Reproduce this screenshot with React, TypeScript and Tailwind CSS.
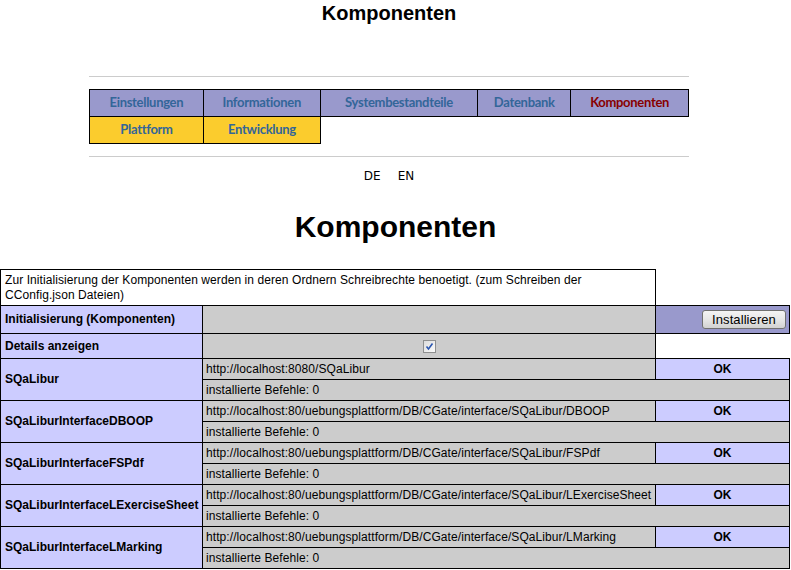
import React from 'react';

interface NavItem {
  label: string;
  width: string;
  active?: boolean;
}

interface Component {
  name: string;
  url: string;
}

const navTop: NavItem[] = [
  { label: 'Einstellungen', width: 'w-[114px]' },
  { label: 'Informationen', width: 'w-[117px]' },
  { label: 'Systembestandteile', width: 'w-[158px]' },
  { label: 'Datenbank', width: 'w-[93px]' },
  { label: 'Komponenten', width: 'w-[118px]', active: true }
];

const navBottom: NavItem[] = [
  { label: 'Plattform', width: 'w-[114px]' },
  { label: 'Entwicklung', width: 'w-[117px]' }
];

const components: Component[] = [
  { name: 'SQaLibur', url: 'http://localhost:8080/SQaLibur' },
  { name: 'SQaLiburInterfaceDBOOP', url: 'http://localhost:80/uebungsplattform/DB/CGate/interface/SQaLibur/DBOOP' },
  { name: 'SQaLiburInterfaceFSPdf', url: 'http://localhost:80/uebungsplattform/DB/CGate/interface/SQaLibur/FSPdf' },
  { name: 'SQaLiburInterfaceLExerciseSheet', url: 'http://localhost:80/uebungsplattform/DB/CGate/interface/SQaLibur/LExerciseSheet' },
  { name: 'SQaLiburInterfaceLMarking', url: 'http://localhost:80/uebungsplattform/DB/CGate/interface/SQaLibur/LMarking' }
];

const navFont = "font-['Lato','Open_Sans',sans-serif]";

function NavCell({ item, yellow }: { item: NavItem; yellow?: boolean }) {
  return (
    <div
      className={`${item.width} flex items-center justify-center border-r border-b border-black text-[13px] font-bold tracking-[-0.3px] ${
        yellow ? 'bg-[#fbcc2d]' : 'bg-[#9999cc]'
      } ${item.active ? 'text-[#880000]' : 'text-[#336699]'}`}
    >
      {item.label}
    </div>
  );
}

function Checkbox() {
  return (
    <div className="inline-flex w-[13px] h-[13px] border border-[#8e8f8f] bg-gradient-to-br from-[#dcdcdc] to-[#fbfbfb] items-center justify-center align-middle">
      <svg width="9" height="9" viewBox="0 0 9 9">
        <path d="M1.5 4.5 L3.5 7 L7.5 1.5" fill="none" stroke="#2b56b0" strokeWidth="1.6" />
      </svg>
    </div>
  );
}

export default function App() {
  return (
    <div className="w-[791px] min-h-[570px] bg-white font-['Liberation_Sans',Arial,sans-serif] text-black overflow-hidden">
      {/* Header */}
      <div className="w-[600px] ml-[89px]">
        <h1 className="pt-px h-[25px] text-[20px] leading-[24px] font-bold text-center">Komponenten</h1>
        <div className="mt-[51px] h-px bg-[#cccccc]" />

        <div className={`mt-[12px] ${navFont}`}>
          <div className="flex h-[28px] border-t border-l border-black">
            {navTop.map((item) => (
              <NavCell key={item.label} item={item} />
            ))}
          </div>
          <div className="flex h-[27px] w-[232px] border-l border-black">
            {navBottom.map((item) => (
              <NavCell key={item.label} item={item} yellow />
            ))}
          </div>
        </div>

        <div className="mt-[12px] h-px bg-[#cccccc]" />
        <div className="mt-[12px] flex justify-center gap-[17px] h-[14px] text-[12px] leading-[14px] font-['DejaVu_Sans',sans-serif] text-black">
          <span>DE</span>
          <span>EN</span>
        </div>
      </div>

      <h2 className="mt-[27px] h-[34px] text-[30px] leading-[34px] font-bold text-center">Komponenten</h2>

      {/* Components table */}
      <table className="mt-[25px] table-fixed border-collapse w-[789px] text-[12px] leading-[15px] tracking-[0.08px]">
        <colgroup>
          <col className="w-[202px]" />
          <col className="w-[453px]" />
          <col className="w-[134px]" />
        </colgroup>
        <tbody>
          <tr className="h-[36px]">
            <td colSpan={2} className="border border-black pl-[4px] pr-[14px] align-middle">
              Zur Initialisierung der Komponenten werden in deren Ordnern Schreibrechte benoetigt. (zum Schreiben der CConfig.json Dateien)
            </td>
            <td />
          </tr>
          <tr className="h-[28px]">
            <td className="border border-black bg-[#ccccff] px-[4px] font-bold tracking-normal">Initialisierung (Komponenten)</td>
            <td className="border border-black bg-[#cccccc]" />
            <td className="border border-black bg-[#9999cc] pr-[3px] text-right">
              <button className="inline-block h-[19px] w-[84px] rounded-[3px] border border-[#707070] bg-gradient-to-b from-[#f4f4f4] via-[#e6e6e6] to-[#d2d2d2] text-[13px] leading-[16px] text-black">
                Installieren
              </button>
            </td>
          </tr>
          <tr className="h-[25px]">
            <td className="border border-black bg-[#ccccff] px-[4px] font-bold tracking-normal">Details anzeigen</td>
            <td className="border border-black bg-[#cccccc] text-center align-middle leading-none">
              <Checkbox />
            </td>
            <td />
          </tr>
          {components.map((c) => (
            <React.Fragment key={c.name}>
              <tr className="h-[21px]">
                <td rowSpan={2} className="border border-black bg-[#ccccff] px-[4px] font-bold tracking-normal whitespace-nowrap">
                  {c.name}
                </td>
                <td className="border border-black bg-[#cccccc] px-[3px] whitespace-nowrap">{c.url}</td>
                <td className="border border-black bg-[#ccccff] text-center font-bold tracking-normal">OK</td>
              </tr>
              <tr className="h-[21px]">
                <td colSpan={2} className="border border-black bg-[#cccccc] px-[3px]">
                  installierte Befehle: 0
                </td>
              </tr>
            </React.Fragment>
          ))}
        </tbody>
      </table>
    </div>
  );
}
